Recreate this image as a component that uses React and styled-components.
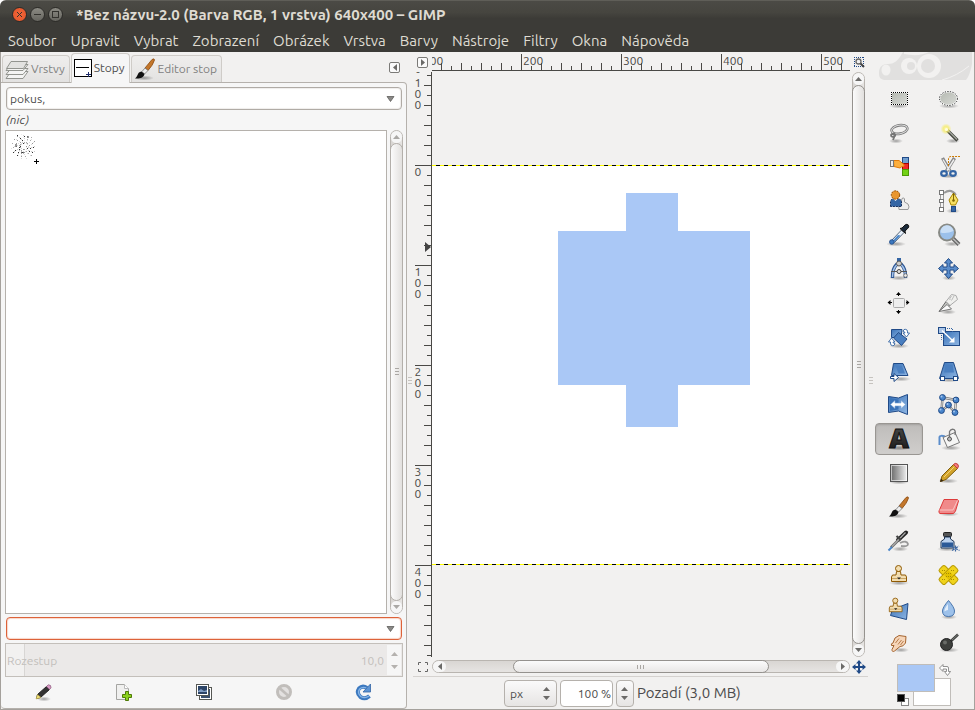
import React, { useLayoutEffect, useRef, useState } from 'react';
import styled, { createGlobalStyle, css } from 'styled-components';

const colors = {
  dark: '#3c3b37',
  light: '#dfdbd2',
  base: '#f2f1f0',
  panel: '#f6f6f6',
  line: '#b5b1ac',
  text: '#4c4c4c',
  accent: '#dd6239',
  fill: '#aac8f6',
};

const GlobalStyle = createGlobalStyle`
  * {
    box-sizing: border-box;
  }

  body {
    margin: 0;
    background: #fff;
    color: ${colors.text};
    font-family: Ubuntu, 'Open Sans', 'Noto Sans', sans-serif;
    font-size: 12px;
  }

  button, input, select {
    margin: 0;
    padding: 0;
    border: 0;
    background: none;
    color: inherit;
    font: inherit;
  }

  svg {
    display: block;
  }
`;

/* ---------- window ---------- */

const Window = styled.div`
  display: flex;
  flex-direction: column;
  min-height: 100vh;
  overflow: hidden;
  border-radius: 6px 6px 0 0;
  background: ${colors.base};
`;

const TitleBar = styled.header`
  display: flex;
  align-items: center;
  gap: 3px;
  height: 30px;
  padding: 0 12px 2px;
  border-top: 1px solid #5f5e58;
  background: linear-gradient(#4b4a45, #46453f 40%, ${colors.dark} 60%);
`;

const Title = styled.h1`
  margin: 0 0 0 10px;
  color: ${colors.light};
  font-size: 15px;
  line-height: 26px;
  font-weight: 700;
  white-space: nowrap;
`;

const WindowButton = styled.button`
  display: flex;
  align-items: center;
  justify-content: center;
  width: 15px;
  height: 15px;
  border: 1px solid #2c2b28;
  border-radius: 50%;
  background: ${({ $close }) =>
    $close ? 'radial-gradient(#f5673a, #e2542a)' : 'linear-gradient(#8b8a83, #66655f)'};
  color: #33322e;
`;

const MenuBar = styled.nav`
  display: flex;
  gap: 14px;
  height: 22px;
  padding: 0 8px;
  background: ${colors.dark};
`;

const MenuItem = styled.button`
  color: ${colors.light};
  font-size: 15px;
  line-height: 20px;
`;

const Body = styled.div`
  display: flex;
  flex: 1;
  border: 1px solid #a5a19c;
  border-top: 0;
`;

const Handle = styled.div`
  display: flex;
  align-items: center;
  justify-content: center;
  width: 6px;
  flex: none;
`;

/* ---------- left dock ---------- */

const Dock = styled.aside`
  display: flex;
  flex-direction: column;
  flex: none;
  width: 406px;
`;

const TabStrip = styled.div`
  display: flex;
  align-items: flex-end;
  gap: 1px;
  height: 30px;
  padding: 0 7px 0 1px;
`;

const Tab = styled.button`
  display: flex;
  align-items: center;
  gap: 2px;
  height: 27px;
  padding: 0 4px 0 2px;
  border: 1px solid #cfccc8;
  border-bottom: 0;
  border-radius: 4px 4px 0 0;
  background: linear-gradient(#efeeed, #e3e2e1);
  color: #80807e;
  line-height: 20px;

  ${({ $active }) =>
    $active &&
    css`
      z-index: 1;
      height: 30px;
      margin-bottom: -1px;
      padding-bottom: 2px;
      background: ${colors.panel};
      color: ${colors.text};
    `}
`;

const SmallButton = styled.button`
  display: flex;
  align-items: center;
  justify-content: center;
  width: 11px;
  height: 11px;
  border: 1px solid #7b7a77;
  border-radius: 2px;
  background: #fafafa;
`;

const TabMenu = styled(SmallButton)`
  margin: 0 0 9px auto;
`;

const Panel = styled.section`
  display: flex;
  flex-direction: column;
  flex: 1;
  padding: 4px 3px 0 4px;
  border: 1px solid ${colors.line};
  border-left: 0;
  border-radius: 0 4px 4px 4px;
  background: ${colors.panel};
`;

const Combo = styled.div`
  display: flex;
  align-items: center;
  height: 23px;
  margin: 0 1px;
  padding: 0 6px 0 3px;
  border: 1px solid ${({ $focused }) => ($focused ? colors.accent : '#b0aba5')};
  border-radius: 4px;
  background: #fff;
  box-shadow: inset 0 0 1px 1px ${({ $focused }) => ($focused ? '#f8d5c8' : '#efedeb')};
`;

const ComboInput = styled.input`
  flex: 1;
  min-width: 0;
  height: 20px;
  outline: none;
`;

const BrushName = styled.p`
  margin: 0;
  padding-left: 1px;
  font-style: italic;
  line-height: 20px;
`;

const BrushArea = styled.div`
  display: flex;
  flex: 1;
  gap: 3px;
  margin-bottom: 3px;
`;

const BrushList = styled.ul`
  flex: 1;
  margin: 0;
  padding: 3px 5px;
  border: 1px solid ${colors.line};
  background: #fff;
  list-style: none;
`;

const Spacing = styled.label`
  display: flex;
  align-items: center;
  height: 34px;
  margin-top: 3px;
  padding: 1px;
  border: 1px solid #c3bfba;
  background: linear-gradient(90deg, #f2f1f0 18px, #d8d6d4 18px, #d8d6d4 19px, #ebe9e8 19px);
  color: #c3c0bc;
`;

const SpacingInput = styled.input`
  flex: 1;
  min-width: 0;
  margin-right: 3px;
  color: inherit;
  text-align: right;
`;

const Stepper = styled.span`
  display: flex;
  flex-direction: column;
  align-items: center;
  justify-content: center;
  gap: ${({ $gap }) => $gap}px;
  width: 14px;
  height: 30px;
  background: ${({ $plain }) => ($plain ? 'none' : colors.panel)};
`;

const ActionBar = styled.div`
  display: grid;
  grid-template-columns: repeat(5, 80px);
  height: 31px;
  padding-bottom: 2px;
  margin: 0 -1px;
`;

const ActionButton = styled.button`
  display: flex;
  align-items: center;
  justify-content: center;
`;

/* ---------- scrollbars ---------- */

const Bar = styled.div`
  display: flex;
  flex-direction: ${({ $row }) => ($row ? 'row' : 'column')};
  flex: ${({ $row }) => ($row ? 1 : 'none')};
  ${({ $row }) => ($row ? 'height' : 'width')}: 13px;
  border: 1px solid #b9b5b0;
  border-radius: 7px;
  background: ${({ $row }) =>
    $row ? 'linear-gradient(#d9d6d3, #e6e4e2)' : 'linear-gradient(90deg, #d9d6d3, #e6e4e2)'};
`;

const BarArrow = styled.button`
  display: flex;
  align-items: center;
  justify-content: center;
  flex: none;
  width: ${({ $row }) => ($row ? 13 : 11)}px;
  height: ${({ $row }) => ($row ? 11 : 12)}px;
  border-radius: 6px;
  background: ${colors.panel};
`;

const Trough = styled.div`
  flex: ${({ $size }) => $size};
`;

const Thumb = styled.div`
  display: flex;
  align-items: center;
  justify-content: center;
  flex: ${({ $size }) => $size};
  margin: ${({ $row }) => ($row ? '-1px 0' : '0 -1px')};
  border: 1px solid ${({ $soft }) => ($soft ? '#b3afaa' : '#95928e')};
  border-radius: 7px;
  background: ${({ $row }) =>
    $row ? 'linear-gradient(#fbfbfb, #e9e7e6)' : 'linear-gradient(90deg, #fbfbfb, #e2e0de)'};
`;

/* ---------- image window ---------- */

const ImageWindow = styled.main`
  display: flex;
  flex-direction: column;
  flex: 1;
  min-width: 0;
`;

const ViewGrid = styled.div`
  display: grid;
  flex: 1;
  grid-template-columns: 19px minmax(0, 1fr) 18px;
  grid-template-rows: 20px minmax(0, 1fr) 19px;
  border-bottom: 1px solid #d5d2cf;
`;

const Corner = styled.div`
  display: flex;
  align-items: center;
  justify-content: center;
`;

const BarCell = styled.div`
  display: flex;
  padding: ${({ $row }) => ($row ? '3px 0' : '0 0 0 2px')};
`;

const RulerBox = styled.div`
  min-width: 0;
  min-height: 0;
  overflow: hidden;
  color: #4a4946;
`;

const Viewport = styled.div`
  overflow: hidden;
  padding-top: 93px;
`;

const layerEdge = 'repeating-linear-gradient(90deg, #ff0 0 4px, #000 4px 8px)';

const Layer = styled.div`
  height: 400px;
  background: ${layerEdge} top / 100% 1px no-repeat, ${layerEdge} bottom / 100% 1px no-repeat, #fff;
`;

const StatusBar = styled.footer`
  display: flex;
  align-items: center;
  gap: 3px;
  height: 32px;
  padding-left: 91px;
`;

const Field = styled.span`
  display: flex;
  align-items: center;
  width: ${({ $width }) => $width}px;
  height: 27px;
  padding-right: ${({ $pad }) => $pad || 0}px;
  border: 1px solid ${colors.line};
  border-radius: 4px;
  background: ${({ $white }) => ($white ? '#fff' : 'linear-gradient(#fafafa, #e6e4e3)')};
`;

const UnitSelect = styled.select`
  flex: 1;
  min-width: 0;
  padding-left: 5px;
  appearance: none;
`;

const ZoomInput = styled.input`
  width: 100%;
  padding-right: 1px;
  text-align: right;
`;

const StatusText = styled.span`
  font-size: 15px;
  line-height: 20px;
`;

/* ---------- toolbox ---------- */

const Toolbox = styled.aside`
  display: flex;
  flex-direction: column;
  flex: none;
  width: 100px;
`;

const ToolGrid = styled.div`
  display: grid;
  grid-template-columns: 48px 48px;
  gap: 2px;
  padding: 2px 1px 0;
`;

const ToolButton = styled.button`
  display: flex;
  align-items: center;
  justify-content: center;
  height: 32px;
  border: 1px solid transparent;
  border-radius: 4px;

  ${({ $active }) =>
    $active &&
    css`
      border-color: #999692;
      background: linear-gradient(#bebcba, #d0cecc);
      box-shadow: inset 0 1px 2px rgba(0, 0, 0, 0.15);
    `}
`;

const ColorArea = styled.div`
  position: relative;
  width: 54px;
  height: 42px;
  margin: 5px 0 0 23px;
`;

const Swatch = styled.button`
  position: absolute;
  ${({ $back }) => ($back ? 'right: 0; bottom: 0;' : 'left: 0; top: 0; z-index: 1;')}
  width: 38px;
  height: 28px;
  border: 1px solid #c0bdb9;
  background: ${({ $color }) => $color};
`;

const CornerButton = styled.button`
  position: absolute;
  ${({ $swap }) => ($swap ? 'right: 0; top: 0;' : 'left: 0; bottom: 0;')}
  width: 12px;
  height: 12px;
`;

/* ---------- small drawings ---------- */

const points = {
  up: '0,4 3.5,0 7,4',
  down: '0,0 7,0 3.5,4',
  left: '4,0 0,3.5 4,7',
  right: '0,0 4,3.5 0,7',
};

const Arrow = ({ dir, color = '#6b6a68' }) => {
  const wide = dir === 'up' || dir === 'down';
  return (
    <svg width={wide ? 7 : 4} height={wide ? 4 : 7} aria-hidden="true">
      <polygon points={points[dir]} fill={color} />
    </svg>
  );
};

const DropArrow = () => (
  <svg width="9" height="6" aria-hidden="true">
    <path d="M1 .5H8L4.5 5.5Z" fill="#8a8987" stroke="#5f5e5c" strokeWidth=".8" />
  </svg>
);

const Grip = ({ row, color = '#c6c3bf' }) => (
  <svg width={row ? 8 : 4} height={row ? 4 : 8} stroke={color} aria-hidden="true">
    <path d={row ? 'M.5 0V4M3.5 0V4M6.5 0V4' : 'M0 .5H4M0 3.5H4M0 6.5H4'} />
  </svg>
);

const ScrollBar = ({ row, sizes, soft, label, target }) => (
  <Bar $row={row} role="scrollbar" aria-label={label} aria-controls={target} aria-valuenow={50}>
    <BarArrow $row={row} aria-label={`${label} –`}>
      <Arrow dir={row ? 'left' : 'up'} color={soft ? '#aaa8a5' : '#6b6a68'} />
    </BarArrow>
    {sizes[0] > 0 && <Trough $size={sizes[0]} />}
    <Thumb $row={row} $soft={soft} $size={sizes[1]}>
      <Grip row={row} color="#aaa7a3" />
    </Thumb>
    {sizes[2] > 0 && <Trough $size={sizes[2]} />}
    <BarArrow $row={row} aria-label={`${label} +`}>
      <Arrow dir={row ? 'right' : 'down'} color={soft ? '#aaa8a5' : '#6b6a68'} />
    </BarArrow>
  </Bar>
);

// length of the ruler box along its axis, kept up to date on resize
const useLength = side => {
  const ref = useRef(null);
  const [length, setLength] = useState(0);

  useLayoutEffect(() => {
    const measure = () => setLength(ref.current[side]);
    measure();
    window.addEventListener('resize', measure);
    return () => window.removeEventListener('resize', measure);
  }, [side]);

  return [ref, length];
};

// every multiple of `step` that falls on the ruler; `origin` is where unit 0 sits
const unitsOn = (origin, length, step, before = 0) => {
  const units = [];
  const first = Math.ceil((-origin - before) / step) * step;
  for (let unit = first; unit + origin < length; unit += step) {
    units.push(unit);
  }
  return units;
};

const tickStart = unit => {
  if (unit % 100 === 0) return 2;
  return unit % 20 === 0 ? 11 : 14;
};

const HorizontalRuler = () => {
  const [ref, length] = useLength('clientWidth');
  const origin = -111;
  return (
    <RulerBox ref={ref}>
      <svg width={length} height="20" fill="currentColor">
        {unitsOn(origin, length, 10).map(unit => (
          <path key={unit} d={`M${origin + unit + 0.5} ${tickStart(unit)}V18`} stroke="currentColor" />
        ))}
        {unitsOn(origin, length - 22, 100, 20).map(unit => (
          <text key={unit} x={origin + unit + 2} y="13">
            {unit}
          </text>
        ))}
        <path d={`M0 18.5H${length}`} stroke="currentColor" />
      </svg>
    </RulerBox>
  );
};

const VerticalRuler = () => {
  const [ref, length] = useLength('clientHeight');
  const origin = 93;
  return (
    <RulerBox ref={ref}>
      <svg width="19" height={length} fill="currentColor">
        {unitsOn(origin, length, 10).map(unit => (
          <path key={unit} d={`M${tickStart(unit)} ${origin + unit + 0.5}H18`} stroke="currentColor" />
        ))}
        {unitsOn(origin, length - 33, 100, 20).map(unit =>
          [...String(unit)].map((digit, i) => (
            <text key={`${unit}-${i}`} x="5" y={origin + unit + 11 + i * 11} textAnchor="middle">
              {digit}
            </text>
          )),
        )}
        <path d={`M18.5 0V${length}`} stroke="currentColor" />
        <polygon points="12,170 18,175 12,180" fill="#444" />
      </svg>
    </RulerBox>
  );
};

// scattered ink dots of the brush
const specks = Array.from({ length: 110 }, (_, i) => {
  const angle = i * 2.4 + ((i * 13) % 7);
  const radius = 3 + ((i * 37) % 10);
  return {
    x: Math.round(12 + Math.cos(angle) * radius),
    y: Math.round(12 + Math.sin(angle) * radius),
    shade: ['#333', '#aaa', '#ddd', '#999', '#ddd', '#eee', '#ccc'][(i * 5) % 7],
  };
});

const BrushPreview = () => (
  <svg width="30" height="30" role="img" aria-label="pokus">
    {specks.map((speck, i) => (
      <rect key={i} x={speck.x} y={speck.y} width="1" height="1" fill={speck.shade} />
    ))}
    <path d="M8 14L10 12M10 18L13 19M5 10V13M16 3H18" stroke="#333" />
    <path d="M23 27.5H28M25.5 25V30" stroke="#000" />
  </svg>
);

const Watermark = () => (
  <svg width="98" height="29" aria-hidden="true">
    <g transform="translate(5 0)">
      <path
        d="M0 21C0 14 4 12 9 12C15 12 19 9 24 0H94C94 12 91 23 87 28H5C1 27 0 25 0 21Z"
        fill="#e1e0df"
      />
      <g fill={colors.base}>
        <ellipse cx="7" cy="18" rx="4.5" ry="5.5" />
        <path d="M25 0H50Q40 5 25 2Z" />
        <circle cx="30" cy="14" r="8" />
        <circle cx="50" cy="14" r="12" />
      </g>
      <circle cx="32" cy="14" r="4" fill="#e1e0df" />
      <circle cx="49" cy="14" r="7" fill="#e1e0df" />
      <path d="M63 28Q78 24 90 14" fill="none" stroke={colors.base} />
    </g>
  </svg>
);

const HiddenSvg = styled.svg`
  position: absolute;
`;

const Gradients = () => (
  <HiddenSvg width="0" height="0" aria-hidden="true">
    <defs>
      <linearGradient id="blue" x2="1" y2="1">
        <stop stopColor="#3a73b8" />
        <stop offset="1" stopColor="#8fb6e3" />
      </linearGradient>
      <linearGradient id="grey" x2="1" y2="1">
        <stop stopColor="#b4b8b0" />
        <stop offset="1" stopColor="#d8dad6" />
      </linearGradient>
      <linearGradient id="ramp">
        <stop stopColor="#666" />
        <stop offset="1" stopColor="#f4f4f4" />
      </linearGradient>
      <linearGradient id="ink" x2="0" y2="1">
        <stop stopColor="#555" />
        <stop offset="1" stopColor="#111" />
      </linearGradient>
      <radialGradient id="glow">
        <stop stopColor="#fffbb0" />
        <stop offset=".5" stopColor="#f6ec6c" stopOpacity=".8" />
        <stop offset="1" stopColor="#f6ec6c" stopOpacity="0" />
      </radialGradient>
      <radialGradient id="shade">
        <stop stopColor="#000" stopOpacity=".35" />
        <stop offset="1" stopColor="#000" stopOpacity="0" />
      </radialGradient>
    </defs>
  </HiddenSvg>
);

const Shade = ({ y = 21, x = 12, rx = 10 }) => (
  <ellipse cx={x} cy={y} rx={rx} ry="2.5" fill="url(#shade)" />
);

const Stamp = () => (
  <g fill="#f2ddb0" stroke="#8f5902">
    <path d="M9.5 8.5L9 12H5.5L4.5 14V18.5H19.5V14L18.5 12H14L13.5 8.5Z" />
    <circle cx="11.5" cy="5.5" r="3" />
    <path d="M5 15.5H19" stroke="#c9a465" />
    <path d="M10 14.5H14L12 16.5Z" fill="#222" stroke="none" />
  </g>
);

const BrushDrawing = () => (
  <>
    <Shade y={21} x={11} />
    <path d="M12 11L19 2.5Q21.5 1 21.5 3Q20 8 15 13.5Z" fill="#c4772b" stroke="#8a4a10" strokeWidth=".8" />
    <path d="M9 14.5L12 11L15 13.5L11.5 17Z" fill="#eee" stroke="#777" strokeWidth=".8" />
    <path d="M2 21.5C5 20 4 15 8.5 14.5L11.5 17C11 20.5 7 22 2 21.5Z" fill="#111" />
  </>
);

const tools = [
  {
    name: 'Obdélníkový výběr',
    icon: (
      <>
        <Shade y={19} />
        <rect x="4.5" y="5.5" width="16" height="12" fill="url(#grey)" stroke="#fff" />
        <path
          d="M4 5.5H21M4 17.5H21M4.5 5V18M20.5 5V18"
          stroke="#000"
          strokeDasharray="1 1"
        />
      </>
    ),
  },
  {
    name: 'Eliptický výběr',
    icon: (
      <>
        <Shade y={19} />
        <ellipse cx="11.5" cy="11.5" rx="9" ry="7" fill="url(#grey)" stroke="#fff" strokeWidth="1.5" />
        <ellipse cx="11.5" cy="11.5" rx="9" ry="7" fill="none" stroke="#222" strokeDasharray="1.3 1.3" />
      </>
    ),
  },
  {
    name: 'Volný výběr',
    icon: (
      <g fill="none">
        <Shade y={20} x={9} rx={7} />
        <g transform="rotate(-10 12.5 8.5)">
          <ellipse cx="12.5" cy="8.5" rx="8" ry="4.2" stroke="#777" strokeWidth="2.6" />
          <ellipse cx="12.5" cy="8.5" rx="8" ry="4.2" stroke="#ddd" />
        </g>
        <path d="M6 12Q9 13 8 15Q4 17 4 14Q5 12 8 14L6 19" stroke="#777" strokeWidth="1.8" />
      </g>
    ),
  },
  {
    name: 'Přibližný výběr',
    icon: (
      <>
        <Shade y={20} x={16} rx={7} />
        <path d="M10 9L20.5 19.5" stroke="#444640" strokeWidth="3.2" />
        <path d="M11 9.5L20 18.5" stroke="#a5a99f" strokeWidth="1.2" />
        <circle cx="9" cy="8" r="5.5" fill="url(#glow)" />
        <circle cx="9.5" cy="8.5" r="1.5" fill="#fffde0" />
      </>
    ),
  },
  {
    name: 'Výběr podle barvy',
    icon: (
      <>
        <rect x="15.5" y="2.5" width="6" height="6" fill="#729fcf" stroke="#204a87" />
        <rect x="15.5" y="8.5" width="6" height="6" fill="#ef2929" stroke="#a40000" />
        <rect x="15.5" y="14.5" width="6" height="6" fill="#73d216" stroke="#4e9a06" />
        <path d="M6.5 5.5H12L17 9.5Q18 12 15 11.5L13 13L7 11.5Z" fill="#fcaf3e" stroke="#e07b0a" />
        <rect x="3.5" y="5.5" width="3" height="6" fill="#eee" stroke="#777" />
      </>
    ),
  },
  {
    name: 'Nůžky',
    icon: (
      <>
        <Shade y={21} />
        <path d="M5.5 3L13 16M17.5 3L9.5 16" stroke="#888" strokeWidth="3.4" />
        <path d="M6 4.5L12.5 15.5M17 4.5L10 15.5" stroke="#eee" strokeWidth="1.4" />
        <g fill="none" stroke="#3465a4" strokeWidth="2.2">
          <ellipse cx="7" cy="18.5" rx="2.8" ry="2.3" />
          <ellipse cx="16" cy="18.5" rx="2.8" ry="2.3" />
        </g>
        <path d="M11.5 11V4Q11.5 1.5 14 1.5H23" fill="none" stroke="#ce7b00" strokeDasharray="2 1" />
      </>
    ),
  },
  {
    name: 'Výběr popředí',
    icon: (
      <>
        <path d="M12 20.5L11.5 16L14 14L15 9.5Q17 8 17.5 10V13L21 15Q23 18 21 20.5Z" fill="#eee" stroke="#999" />
        <path
          d="M3.5 17.5V13Q3.5 9.5 8 9.5Q14.5 9.5 14.5 13V17.5Z"
          fill="#3465a4"
          stroke="#162f5c"
          strokeDasharray="2 1"
        />
        <path d="M6.5 10L8.5 12L10.5 10Z" fill="#fff" />
        <circle cx="8.5" cy="6" r="4.2" fill="#e9962f" stroke="#8f4a02" strokeDasharray="2 1" />
      </>
    ),
  },
  {
    name: 'Cesty',
    icon: (
      <>
        <Shade y={22} x={16} rx={7} />
        <path d="M7 4Q14 -1 19 6" fill="none" stroke="#999" strokeWidth="2" />
        <path d="M5 3V21" stroke="#888" strokeWidth="3.6" />
        <path d="M5 3V21" stroke="#fff" strokeWidth="1.8" />
        <g fill="#fff" stroke="#777">
          <rect x="2.5" y="1.5" width="4" height="4" />
          <rect x="2.5" y="10.5" width="4" height="3" />
          <rect x="2.5" y="18.5" width="4" height="4" />
        </g>
        <path d="M16.5 4L21 11L18.5 16H14L12 11Z" fill="#f6df63" stroke="#a98600" />
        <path d="M16.5 4V11" stroke="#806600" />
        <circle cx="16.5" cy="11.5" r="1.3" fill="#806600" />
        <rect x="14.5" y="17.5" width="4" height="5" fill="#3465a4" stroke="#204a87" />
      </>
    ),
  },
  {
    name: 'Kapátko',
    icon: (
      <>
        <Shade y={21} x={9} />
        <path d="M14.5 7L5 17V19.5H7.5L17 9.5Z" fill="#e8f0fa" stroke="#5a6a7c" />
        <path d="M11 12L6 17.5L7.5 19L13.5 12.5Z" fill="#4b86c8" />
        <path
          d="M13 5.5L15 5L18 2Q20 .5 21.5 2.2Q22.5 4 20.5 5.7L18 8L18.5 10.5Z"
          fill="#1c2a3a"
          stroke="#111"
        />
        <circle cx="4.8" cy="19" r="2.3" fill="#3b78bf" stroke="#204a87" strokeWidth=".8" />
      </>
    ),
  },
  {
    name: 'Lupa',
    icon: (
      <>
        <Shade y={21} x={15} rx={8} />
        <path d="M16 15.5L22 21.5" stroke="#666" strokeWidth="4" />
        <path d="M16 15.5L22 21.5" stroke="#bbb" strokeWidth="1.5" />
        <circle cx="10" cy="9.5" r="8" fill="#9bc0ea" stroke="#888a85" strokeWidth="2" />
        <path d="M3.5 9.5A6.5 6.5 0 0 1 16.5 8Q10 11 3.5 9.5Z" fill="#c9def5" />
      </>
    ),
  },
  {
    name: 'Měřidlo',
    icon: (
      <>
        <Shade y={21} />
        <path d="M10 7Q5 12 5.5 21M14 7Q19 12 18.5 21" fill="none" stroke="#2c5593" strokeWidth="3.4" />
        <path d="M10 7.5Q5.5 12 5.5 20M14 7.5Q18.5 12 18.5 20" fill="none" stroke="#a9c5e8" strokeWidth="1.4" />
        <path d="M4 14.5H20" stroke="#555" />
        <circle cx="12" cy="14.5" r="2" fill="#ddd" stroke="#444" />
        <rect x="10" y="1" width="4" height="4" fill="#3465a4" />
        <circle cx="12" cy="6.5" r="2.5" fill="#ccc" stroke="#555" />
        <circle cx="18.5" cy="18.5" r="1.8" fill="#eee" stroke="#777" />
      </>
    ),
  },
  {
    name: 'Přesun',
    icon: (
      <>
        <Shade y={21} rx={7} />
        <path
          d="M11.5 1.5L15.5 6H13V10H17V7.5L21.5 11.5L17 15.5V13H13V17H15.5L11.5 21.5L7.5 17H10V13H6V15.5L1.5 11.5L6 7.5V10H10V6H7.5Z"
          fill="#5b8dcb"
          stroke="#204a87"
        />
      </>
    ),
  },
  {
    name: 'Zarovnání',
    icon: (
      <>
        <rect x="6.5" y="7.5" width="11" height="9" rx="1" fill="#eee" stroke="#aaa" />
        <path d="M11.5 2V5M11.5 19V22M2 11.5H5M19 11.5H22" stroke="#000" />
        <path d="M11.5 1L14 4H9ZM11.5 23L14 20H9ZM.5 11.5L3.5 9V14ZM22.5 11.5L19.500 9V14Z" />
      </>
    ),
  },
  {
    name: 'Ořez',
    icon: (
      <>
        <Shade y={21} x={11} rx={8} />
        <path d="M2 20.5L9 10.5L13 14.5Z" fill="#c6c7c4" stroke="#666" />
        <path d="M9 10.5L13 14.5L20.5 8.5L19 4.5L14.5 3.5Z" fill="#f0f0ee" stroke="#aaa" />
        <path d="M2 20.5L10 13.5L14.5 18Z" fill="#fafafa" stroke="#777" />
        <path d="M14.5 5Q12 8 13 9M17 5L14.5 9.5" stroke="#bbb" fill="none" />
      </>
    ),
  },
  {
    name: 'Otáčení',
    icon: (
      <>
        <Shade y={21} />
        <path d="M4.5 4.5H15L14 12.5H4.5Z" fill="url(#blue)" stroke="#204a87" />
        <path d="M11.5 7.5L20 14L14.5 20.5L6.5 13Z" fill="#4a7fc0" stroke="#204a87" />
        <g fill="#fff" stroke="#3465a4" strokeWidth=".9">
          <path d="M17 4.5Q21 3.5 20.5 8H22.5L19.5 12L16 8H18Q18 6.5 16 6.5Z" />
          <path d="M7 20.5Q3 21.5 3.5 17H1.5L4.5 13L8 17H6Q6 18.5 8 18.5Z" />
        </g>
      </>
    ),
  },
  {
    name: 'Škálování',
    icon: (
      <>
        <rect x="6.5" y="6.5" width="16" height="14" fill="url(#blue)" stroke="#204a87" />
        <rect x="1.5" y="2.5" width="7" height="6" fill="#a9c5e8" stroke="#204a87" />
        <path d="M10 3.5H15.5V8M4.5 10V14.5H8" fill="none" stroke="#3465a4" strokeDasharray="1 1" />
        <path d="M5 5.5L15.5 15.5" stroke="#fff" strokeWidth="1.4" />
        <path d="M17.5 17.5V12L12 17.5Z" fill="#fff" />
      </>
    ),
  },
  {
    name: 'Naklonění',
    icon: (
      <>
        <Shade y={20} x={14} />
        <path d="M6.5 4.5H16L21 16.5H4.5Z" fill="url(#blue)" stroke="#204a87" />
        <path d="M8.5 6.5H14.8L18 14.5H11.5Z" fill="#4a7fc0" />
        <path d="M3.5 17.5H7V14.5L11.5 18.5L7 22.5V19.5H3.5Z" fill="#fff" stroke="#204a87" />
      </>
    ),
  },
  {
    name: 'Perspektiva',
    icon: (
      <>
        <Shade y={21} />
        <path d="M7.5 3.5H16.5L21.5 19.5H2.5Z" fill="url(#blue)" stroke="#204a87" />
        <path d="M8.5 5.5H15.5L17 13.5H7Z" fill="#4a7fc0" />
        <rect x="3.5" y="17.5" width="4" height="4" fill="#fff" stroke="#204a87" />
        <rect x="16.5" y="17.5" width="4" height="4" fill="#fff" stroke="#204a87" />
      </>
    ),
  },
  {
    name: 'Překlopení',
    icon: (
      <>
        <path d="M1.5 3.5L11.5 5L20.5 1.5V21.5L11.5 18L1.5 19.5Z" fill="url(#blue)" stroke="#204a87" />
        <path d="M3 5L11.5 6.5V16.5L3 18Z" fill="#3a73b8" />
        <path
          d="M3.5 11.5L8 7.5V10H14V7.5L18.5 11.5L14 15.5V13H8V15.5Z"
          fill="#fff"
          stroke="#7ba5d6"
          strokeWidth=".6"
        />
      </>
    ),
  },
  {
    name: 'Klecová transformace',
    icon: (
      <>
        <path
          d="M5.5 4.5L19 7L18 19.5L11.5 12.5L4.5 17.5Z"
          fill="none"
          stroke="#777"
          strokeWidth="2.4"
        />
        <path d="M5.5 4.5L19 7L18 19.5L11.5 12.5L4.5 17.5Z" fill="none" stroke="#ddd" />
        {[[5.5, 4.5], [19, 7], [11.5, 12], [4.5, 17.5], [18, 19.5]].map(([x, y]) => (
          <g key={x}>
            <circle cx={x} cy={y} r="2.9" fill="#4a86cc" stroke="#204a87" />
            <circle cx={x - 1} cy={y - 1} r="1" fill="#a9c8ee" />
          </g>
        ))}
      </>
    ),
  },
  {
    name: 'Text',
    icon: (
      <>
        <Shade y={21} rx={11} />
        <text
          x="12"
          y="21"
          textAnchor="middle"
          fontFamily="'Open Sans', sans-serif"
          fontSize="27"
          fontWeight="800"
          fill="url(#ink)"
          stroke="#111"
        >
          A
        </text>
      </>
    ),
  },
  {
    name: 'Plechovka',
    icon: (
      <>
        <Shade y={21} x={14} />
        <path d="M8 9.5Q3 8 2.5 10V18" fill="none" stroke="#5b8dcb" strokeWidth="2" />
        <path d="M6 10.5L18 5.5L22.5 15.5L10.5 20.5Z" fill="#f6f6f5" stroke="#777" />
        <path d="M12.5 12V4.5Q14 1.5 17 2.5Q19 4 18 8" fill="none" stroke="#777" strokeWidth="1.3" />
        <circle cx="12.5" cy="12" r="2" fill="#bbb" stroke="#555" />
      </>
    ),
  },
  {
    name: 'Přechod',
    icon: (
      <>
        <Shade y={21} />
        <rect x="3.5" y="3.5" width="17" height="17" fill="url(#ramp)" stroke="#555" />
        <rect x="4.5" y="4.5" width="15" height="15" fill="none" stroke="#fff" strokeOpacity=".6" />
      </>
    ),
  },
  {
    name: 'Tužka',
    icon: (
      <>
        <Shade y={20} x={11} />
        <path d="M3.5 20.5L5 15L16.5 3.5L20.5 7.5L9 18.5Z" fill="#d3a329" stroke="#7d5a0a" />
        <path d="M7 16L17.5 5.5" stroke="#f2d27a" />
        <path d="M16.5 3.5Q18 1.5 20.5 3Q22.5 5 20.5 7.5Z" fill="#f27e7e" stroke="#c43c3c" />
        <path d="M3 21L4 17.5L6.5 20Z" fill="#3a2a10" />
      </>
    ),
  },
  { name: 'Štětec', icon: <BrushDrawing /> },
  {
    name: 'Guma',
    icon: (
      <>
        <Shade y={19} />
        <path d="M7 4.5H20.5L21.5 6L18.5 16L16.5 18.5H3Q1.5 18 2 16Z" fill="#f08a8a" stroke="#dc3b3b" />
        <path d="M2.5 15H16L20.5 5.5" fill="none" stroke="#f9c4c4" />
      </>
    ),
  },
  {
    name: 'Rozprašovač',
    icon: (
      <>
        <Shade y={20} x={13} rx={8} />
        <path d="M13 14Q20 11 21 15Q21 18 14 17" fill="none" stroke="#999" strokeWidth="1.8" />
        <path d="M11 11L19 3.5" stroke="#222" strokeWidth="4" strokeLinecap="round" />
        <path d="M4 18.5L12 10.500" stroke="#666" strokeWidth="2.6" />
        <path d="M5 17.5L18.5 3.5" stroke="#aaa" strokeWidth="1.2" />
        <path d="M9.500 7L14 11" stroke="#444" strokeWidth="2.2" />
        <path d="M1.5 21.5L5 18" stroke="#4b86c8" strokeWidth="2" />
      </>
    ),
  },
  {
    name: 'Inkoust',
    icon: (
      <>
        <Shade y={20} x={10} />
        <rect x="6.5" y="3.5" width="8" height="4" rx="1" fill="#555" stroke="#222" />
        <path d="M7.5 8H13.5V10L17 12.5V19H4V12.5L7.5 10Z" fill="#bcd2ee" stroke="#1f3656" />
        <path d="M5 13.5H16V18H5Z" fill="#2c5a97" />
        <path
          d="M14.5 17.5L22.5 21.5M15 21.5L22 17M18.5 16.5V22.5"
          stroke="#3d68a3"
          strokeWidth="1.2"
          strokeDasharray="3 1"
        />
      </>
    ),
  },
  {
    name: 'Klonování',
    icon: (
      <>
        <Shade y={20} />
        <Stamp />
      </>
    ),
  },
  {
    name: 'Léčení',
    icon: (
      <>
        <g fill="#f0d31c" stroke="#b89a00">
          <rect x="1" y="8" width="21" height="8" rx="2" transform="rotate(45 11.5 12)" />
          <rect x="1" y="8" width="21" height="8" rx="2" transform="rotate(-45 11.5 12)" />
        </g>
        <path d="M7 12L11.5 7.5L16 12L11.5 16.5Z" fill="#e3c200" />
        <path
          d="M5 7.5H9M14 7.5H18M5 16.5H9M14 16.5H18M9 10.5H14M9 13.5H14"
          stroke="#a88c00"
          strokeDasharray="1 1"
        />
      </>
    ),
  },
  {
    name: 'Klonování s perspektivou',
    icon: (
      <>
        <path d="M5.5 12.5L21 6.5L19.5 22.5L3.5 18.5Z" fill="url(#blue)" stroke="#204a87" />
        <g transform="translate(-1.5 -1) scale(.85)">
          <Stamp />
        </g>
      </>
    ),
  },
  {
    name: 'Zaostření',
    icon: (
      <>
        <Shade y={20} rx={8} />
        <path
          d="M11.5 3.5Q17.5 10.5 17.5 14Q17.5 19.5 11.5 19.5Q5.5 19.5 5.5 14Q5.5 10.5 11.5 3.5Z"
          fill="#9dc1ea"
          stroke="#4a76ad"
        />
        <path d="M11 7Q7 12 7.5 14.5Q9 13 11 13Z" fill="#e3eefa" />
      </>
    ),
  },
  {
    name: 'Rozmazání',
    icon: (
      <>
        <Shade y={19} x={14} rx={8} />
        <path
          d="M12 4.5L19 5.5L18.5 12Q16 16 13 15.5L7.5 20Q5 21.5 5 18.5L7 14.5H4.5Q3.5 12.5 6 12L8 7Z"
          fill="#f6d5b8"
          stroke="#a5642f"
        />
        <path d="M8.5 12L12 7.5M11 13.5L14.5 9M13.5 14L16.5 10" stroke="#a5642f" strokeWidth=".8" />
      </>
    ),
  },
  {
    name: 'Zesvětlení',
    icon: (
      <>
        <Shade y={19} x={12} />
        <path d="M13 11L21 3.5" stroke="#3d3f3c" strokeWidth="2.6" />
        <path d="M15 9L21 3.5" stroke="#888" strokeWidth=".8" />
        <circle cx="9.5" cy="13.5" r="6" fill="#3d3f3c" stroke="#222" />
        <circle cx="8" cy="11.5" r="2" fill="#6a6c68" />
      </>
    ),
  },
];

const actions = [
  {
    name: 'Upravit stopu',
    icon: (
      <>
        <Shade y={16} x={9} rx={7} />
        <path d="M1.5 15.5L2.5 11.5L11.5 3.5L14.5 6.5L5.5 14.5Z" fill="#333" stroke="#222" />
        <path d="M1 16L2.5 11.5L6 14.5Z" fill="#efe07a" stroke="#b8a53e" strokeWidth=".5" />
        <path
          d="M11.5 3.5Q13 .5 15.5 2.5Q17 5 14.5 6.5Z"
          fill="#d79ac4"
          stroke="#8b5a7c"
          strokeWidth=".7"
        />
      </>
    ),
  },
  {
    name: 'Nová stopa',
    icon: (
      <>
        <path d="M1.5 1.5H9.5L13.5 5.5V16.5H1.5Z" fill="#f0f0ef" stroke="#a5a5a2" />
        <path d="M9.5 1.5V5.5H13.5" fill="#fff" stroke="#bbb" />
        <path
          d="M10.5 8.5H13.5V11.5H16.5V14.5H13.5V17.5H10.5V14.5H7.5V11.5H10.5Z"
          fill="#8ad11d"
          stroke="#4e7a06"
        />
      </>
    ),
  },
  {
    name: 'Duplikovat stopu',
    icon: (
      <>
        <rect x="4.5" y="4.5" width="12" height="12" fill="#fff" stroke="#555753" />
        <rect x="6" y="6" width="9" height="9" fill="#3a4f6e" />
        <rect x="1.5" y="1.5" width="12" height="11" fill="#fff" stroke="#555753" />
        <rect x="3" y="3" width="9" height="8" fill="#2c4467" />
        <path d="M3 8L6 6L9 8L12 7V9H3Z" fill="#7f9cc4" />
      </>
    ),
  },
  {
    name: 'Smazat stopu',
    icon: (
      <>
        <circle cx="9" cy="9" r="6.5" fill="#e3e1e0" stroke="#c1bebb" strokeWidth="3" />
        <path d="M4.5 5L13.5 13" stroke="#c1bebb" strokeWidth="2.6" />
      </>
    ),
  },
  {
    name: 'Obnovit stopy',
    icon: (
      <>
        <path d="M14.5 13Q10 17 5.5 14Q1 10 4 5.5Q7.5 2 12 5" fill="none" stroke="#3b78bf" strokeWidth="4" />
        <path
          d="M14 13Q10 16 5.8 13.5Q2 10 4.6 6Q8 3 12 5.5"
          fill="none"
          stroke="#86b4e6"
          strokeWidth="1.4"
        />
        <path d="M15.5 1V9H8Z" fill="#5b93d3" stroke="#3465a4" strokeWidth=".8" />
      </>
    ),
  },
];

const menu = [
  'Soubor',
  'Upravit',
  'Vybrat',
  'Zobrazení',
  'Obrázek',
  'Vrstva',
  'Barvy',
  'Nástroje',
  'Filtry',
  'Okna',
  'Nápověda',
];

const tabs = [
  {
    name: 'Vrstvy',
    left: 0,
    width: 24,
    icon: (
      <g fill="#f4f4f3" stroke="#888a85" strokeWidth=".9">
        <path d="M1 21.5L6 14.5H23L18 21.5Z" />
        <path d="M1 17.5L6 11.5H23L18 17.5Z" />
        <path d="M1 13.5L6 7.5H23L18 13.5Z" />
        <path d="M1.5 11.5L6 4.5H22.5L18.5 11.5Z" fill="#e2e2e0" />
      </g>
    ),
  },
  {
    name: 'Stopy',
    left: 3,
    width: 18,
    icon: (
      <>
        <rect x="3.5" y="3.5" width="17" height="17" fill="#fff" stroke="#000" />
        <path d="M5 11.5H18" stroke="#000" />
        <path d="M15 18.5H20M17.5 16V21" stroke="#1c2a6a" />
      </>
    ),
  },
  { name: 'Editor stop', left: 1, width: 22, icon: <BrushDrawing /> },
];

/* ---------- parts ---------- */

const BrushDock = () => {
  const [tab, setTab] = useState('Stopy');
  const [filter, setFilter] = useState('pokus,');
  const [tags, setTags] = useState('');

  return (
    <Dock>
      <TabStrip role="tablist">
        {tabs.map(({ name, left, width, icon }) => (
          <Tab
            key={name}
            role="tab"
            aria-selected={name === tab}
            $active={name === tab}
            onClick={() => setTab(name)}
          >
            <svg width={width} height="24" viewBox={`${left} 0 ${width} 24`} aria-hidden="true">
              {icon}
            </svg>
            {name}
          </Tab>
        ))}
        <TabMenu aria-label="Nabídka karty">
          <Arrow dir="left" />
        </TabMenu>
      </TabStrip>
      <Panel>
        <Combo>
          <ComboInput aria-label="Filtr" value={filter} onChange={e => setFilter(e.target.value)} />
          <button type="button" aria-label="Zobrazit štítky">
            <DropArrow />
          </button>
        </Combo>
        <BrushName>(nic)</BrushName>
        <BrushArea>
          <BrushList id="brushes">
            <li>
              <BrushPreview />
            </li>
          </BrushList>
          <ScrollBar sizes={[0, 1, 0]} soft label="Posun seznamu" target="brushes" />
        </BrushArea>
        <Combo $focused>
          <ComboInput aria-label="Štítky" value={tags} onChange={e => setTags(e.target.value)} />
          <button type="button" aria-label="Zvolit štítky">
            <DropArrow />
          </button>
        </Combo>
        <Spacing>
          Rozestup
          <SpacingInput value="10,0" disabled readOnly />
          <Stepper $gap={9}>
            <Arrow dir="up" color="#b5b2af" />
            <Arrow dir="down" color="#b5b2af" />
          </Stepper>
        </Spacing>
        <ActionBar>
          {actions.map(({ name, icon }) => (
            <ActionButton key={name} aria-label={name}>
              <svg width="18" height="18" aria-hidden="true">
                {icon}
              </svg>
            </ActionButton>
          ))}
        </ActionBar>
      </Panel>
    </Dock>
  );
};

const ImageView = () => (
  <ImageWindow>
    <ViewGrid>
      <Corner>
        <SmallButton aria-label="Nabídka obrázku">
          <Arrow dir="right" />
        </SmallButton>
      </Corner>
      <HorizontalRuler />
      <Corner>
        <svg width="12" height="12" aria-hidden="true">
          <path
            d="M1 1.5H11M1 10.5H11M1.5 1V11M10.5 1V11"
            stroke="#204a87"
            strokeDasharray="1 1"
          />
          <circle cx="5.5" cy="5.5" r="2.5" fill="none" stroke="#666" strokeWidth="1.3" />
          <path d="M7.5 7.5L11 11" stroke="#444" strokeWidth="2" />
        </svg>
      </Corner>
      <VerticalRuler />
      <Viewport id="view">
        <Layer>
          <svg width="100%" height="400" role="img" aria-label="Pozadí">
            <path d="M194 28H246V66H318V220H246V262H194V220H126V66H194Z" fill={colors.fill} />
          </svg>
        </Layer>
      </Viewport>
      <BarCell>
        <ScrollBar sizes={[0, 1, 0]} label="Svislý posun" target="view" />
      </BarCell>
      <Corner>
        <svg width="10" height="10" aria-hidden="true">
          <path
            d="M.5 3V.5H3M7 .5H9.5V3M9.5 7V9.500H7M3 9.500H.5V7"
            fill="none"
            stroke="#666"
          />
        </svg>
      </Corner>
      <BarCell $row>
        <ScrollBar row sizes={[68, 256, 68]} label="Vodorovný posun" target="view" />
      </BarCell>
      <Corner>
        <svg width="14" height="14" aria-hidden="true">
          <path d="M7 1V13M1 7H13" stroke="#204a87" strokeWidth="2" />
          <path
            d="M7 0L10 3.5H4ZM7 14L10 10.5H4ZM0 7L3.5 4V10ZM14 7L10.5 4V10Z"
            fill="#204a87"
          />
        </svg>
      </Corner>
    </ViewGrid>
    <StatusBar>
      <Field $width={53} $pad={3}>
        <UnitSelect aria-label="Jednotka" defaultValue="px">
          <option>px</option>
          <option>mm</option>
        </UnitSelect>
        <Stepper $plain $gap={5}>
          <Arrow dir="up" />
          <Arrow dir="down" />
        </Stepper>
      </Field>
      <Field $white $width={53}>
        <ZoomInput aria-label="Zvětšení" defaultValue="100 %" />
      </Field>
      <Field $width={18}>
        <Stepper $plain $gap={5}>
          <Arrow dir="up" />
          <Arrow dir="down" />
        </Stepper>
      </Field>
      <StatusText>Pozadí (3,0 MB)</StatusText>
    </StatusBar>
  </ImageWindow>
);

const ToolPanel = () => {
  const [active, setActive] = useState('Text');

  return (
    <Toolbox>
      <Watermark />
      <ToolGrid>
        {tools.map(({ name, icon }) => (
          <ToolButton
            key={name}
            aria-label={name}
            $active={name === active}
            onClick={() => setActive(name)}
          >
            <svg width="24" height="24" aria-hidden="true">
              {icon}
            </svg>
          </ToolButton>
        ))}
      </ToolGrid>
      <ColorArea>
        <Swatch $color={colors.fill} aria-label="Barva popředí" />
        <Swatch $back $color="#fff" aria-label="Barva pozadí" />
        <CornerButton $swap aria-label="Prohodit barvy">
          <svg width="12" height="12" aria-hidden="true">
            <path
              d="M.5 4L4 .5V2.5H8Q9.5 2.5 9.5 4V7.5H11.5L8.5 11.5L5.5 7.5H7.5V5H4V7.5Z"
              fill="#fff"
              stroke="#777"
              strokeWidth=".8"
            />
          </svg>
        </CornerButton>
        <CornerButton aria-label="Výchozí barvy">
          <svg width="12" height="12" aria-hidden="true">
            <rect x="4.5" y="4.5" width="7" height="7" fill="#fff" stroke="#888" />
            <rect x=".5" y=".5" width="7" height="7" fill="#000" stroke="#555" />
          </svg>
        </CornerButton>
      </ColorArea>
    </Toolbox>
  );
};

const App = () => (
  <>
    <GlobalStyle />
    <Gradients />
    <Window>
      <TitleBar>
        <WindowButton $close aria-label="Zavřít">
          <svg width="7" height="7" stroke="currentColor">
            <path d="M1 1L6 6M6 1L1 6" />
          </svg>
        </WindowButton>
        <WindowButton aria-label="Minimalizovat">
          <svg width="7" height="7" stroke="currentColor">
            <path d="M0 3.5H7" />
          </svg>
        </WindowButton>
        <WindowButton aria-label="Maximalizovat">
          <svg width="7" height="7" stroke="currentColor" fill="none">
            <rect x=".5" y=".5" width="6" height="6" />
          </svg>
        </WindowButton>
        <Title>*Bez názvu-2.0 (Barva RGB, 1 vrstva) 640x400 – GIMP</Title>
      </TitleBar>
      <MenuBar>
        {menu.map(item => (
          <MenuItem key={item}>{item}</MenuItem>
        ))}
      </MenuBar>
      <Body>
        <BrushDock />
        <Handle>
          <Grip />
        </Handle>
        <ImageView />
        <Handle>
          <Grip />
        </Handle>
        <ToolPanel />
      </Body>
    </Window>
  </>
);

export default App;
